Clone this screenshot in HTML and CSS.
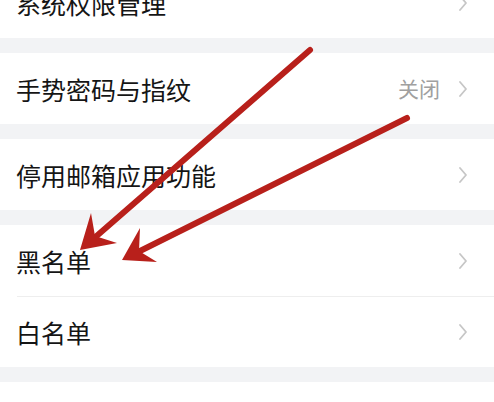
FILE: index.html
```html
<!DOCTYPE html>
<html lang="zh">
<head>
<meta charset="utf-8">
<link rel="stylesheet" href="styles.css">
</head>
<body>
<div class="page">
  <div class="list">
    <div class="group first">
      <div class="row"><span class="label">系统权限管理</span><span class="right"><svg class="chev" viewBox="0 0 8 16"><path d="M1 1 L7 8 L1 15"/></svg></span></div>
    </div>
    <div class="group">
      <div class="row"><span class="label">手势密码与指纹</span><span class="right"><span class="value">关闭</span><svg class="chev" viewBox="0 0 8 16"><path d="M1 1 L7 8 L1 15"/></svg></span></div>
    </div>
    <div class="group">
      <div class="row"><span class="label">停用邮箱应用功能</span><span class="right"><svg class="chev" viewBox="0 0 8 16"><path d="M1 1 L7 8 L1 15"/></svg></span></div>
    </div>
    <div class="group">
      <div class="row"><span class="label">黑名单</span><span class="right"><svg class="chev" viewBox="0 0 8 16"><path d="M1 1 L7 8 L1 15"/></svg></span></div>
      <div class="row divided"><span class="label">白名单</span><span class="right"><svg class="chev" viewBox="0 0 8 16"><path d="M1 1 L7 8 L1 15"/></svg></span></div>
    </div>
    <div class="group tail"></div>
  </div>
  <svg class="arrows" viewBox="0 0 494 402" width="494" height="402">
    <g class="arrow">
      <line x1="310" y1="50" x2="92" y2="240"/>
      <polygon points="80,250 91,213 95,236 117,243"/>
    </g>
    <g class="arrow">
      <line x1="407" y1="118" x2="136" y2="253"/>
      <polygon points="122,260 140,228 139,251 157,262"/>
    </g>
  </svg>
</div>
</body>
</html>
```
FILE: styles.css
```css
html, body {
  margin: 0;
  padding: 0;
  background: #ffffff;
}
.page {
  position: relative;
  width: 494px;
  height: 402px;
  overflow: hidden;
  font-family: "Noto Sans CJK SC", "Noto Sans", sans-serif;
}
.list {
  display: flex;
  flex-direction: column;
  gap: 15px;
  background: #f2f3f5;
  margin-top: -33px;
}
.group {
  background: #ffffff;
  display: flex;
  flex-direction: column;
}
.group.tail {
  height: 40px;
}
.row {
  height: 71px;
  display: flex;
  align-items: center;
  justify-content: space-between;
  padding: 0 27px 0 16px;
  box-sizing: border-box;
}
.row.divided {
  position: relative;
  height: 71px;
}
.row.divided::before {
  content: "";
  position: absolute;
  left: 17px;
  right: 0;
  top: 0;
  height: 1px;
  background: #eeeeee;
}
.label {
  font-size: 25px;
  color: #151515;
  line-height: 1;
  margin-top: 2px;
}
.right {
  display: flex;
  align-items: center;
  gap: 19px;
}
.value {
  font-size: 21px;
  color: #a0a0a0;
  line-height: 1;
}
.chev {
  width: 8px;
  height: 16px;
  display: block;
}
.chev path {
  fill: none;
  stroke: #c6c6c6;
  stroke-width: 1.8;
  stroke-linecap: round;
  stroke-linejoin: round;
}
.arrows {
  position: absolute;
  left: 0;
  top: 0;
}
.arrow line {
  stroke: #b8201b;
  stroke-width: 6;
  stroke-linecap: round;
}
.arrow polygon {
  fill: #b8201b;
}
```
